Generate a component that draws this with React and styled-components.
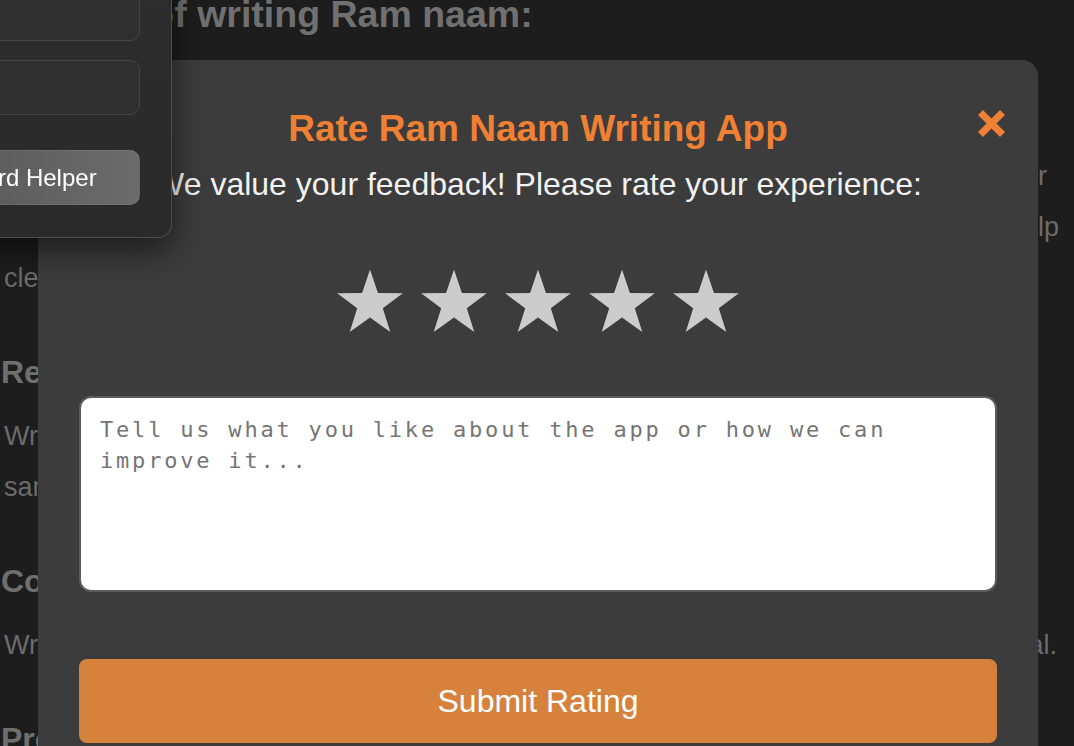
import React from "react";
import styled, { createGlobalStyle } from "styled-components";

const GlobalStyle = createGlobalStyle`
  html, body {
    margin: 0;
    padding: 0;
    background: #1d1d1d;
    overflow: hidden;
  }
  body {
    font-family: "Liberation Sans", Arial, sans-serif;
  }
`;

const Page = styled.div`
  position: relative;
  width: 1074px;
  height: 746px;
  overflow: hidden;
  background: #1d1d1d;
`;

// the article behind the dialog
const Article = styled.main`
  padding: 0 0 0 2px;
  color: #6b6b6b;
`;

const PageTitle = styled.h2`
  margin: -8px 0 0 -9px;
  font-size: 37.5px;
  line-height: 44px;
  font-weight: 700;
  color: #707070;
  white-space: nowrap;
`;

const Section = styled.h3`
  margin: 48px 0 19px -1px;
  font-size: 32px;
  line-height: 40px;
  font-weight: 700;
  color: #6f6f6f;
  white-space: nowrap;
`;

const Para = styled.p`
  margin: ${(p) => (p.$first ? "115px" : "0")} 0 0 2px;
  font-size: 27px;
  line-height: 51px;
`;

const Line = styled.span`
  display: block;
  width: ${(p) => p.$w || 1040}px;
  text-align: left;
  text-align-last: ${(p) => (p.$full ? "justify" : "left")};
`;

// dropdown menu sticking in from the top-left
const Menu = styled.div`
  position: fixed;
  left: -114px;
  top: -47px;
  width: 286px;
  box-sizing: border-box;
  padding: 32px 31px 32px 32px;
  display: flex;
  flex-direction: column;
  gap: 19px;
  background: linear-gradient(180deg, #2d2d2d, #2a2a2a);
  border: 1px solid rgba(255, 255, 255, 0.16);
  border-radius: 14px;
  box-shadow: 0 12px 32px rgba(0, 0, 0, 0.55);
  z-index: 20;
`;

const MenuInput = styled.div`
  height: 55px;
  box-sizing: border-box;
  border: 1px solid #454545;
  border-radius: 10px;
  background: #2f2f2f;
`;

const MenuButton = styled.button`
  margin-top: 16px;
  height: 55px;
  border: 1px solid rgba(255, 255, 255, 0.08);
  border-radius: 10px;
  background: linear-gradient(90deg, #565656, #6b6b6b);
  color: #fff;
  font-family: "Liberation Sans", Arial, sans-serif;
  font-size: 24px;
  white-space: nowrap;
  text-align: center;
  padding: 0;
`;

const Overlay = styled.div`
  position: fixed;
  inset: 0;
  display: flex;
  align-items: flex-start;
  padding: 60px 0 0 38px;
  z-index: 10;
`;

const Modal = styled.div`
  position: relative;
  width: 1000px;
  box-sizing: border-box;
  padding: 47px 41px 40px;
  display: flex;
  flex-direction: column;
  background: #3c3c3c;
  border-radius: 16px;
`;

const Close = styled.button`
  position: absolute;
  top: 50px;
  right: 33px;
  width: 27px;
  height: 27px;
  padding: 0;
  border: none;
  background: none;
  display: flex;
`;

const Title = styled.h2`
  margin: 0;
  text-align: center;
  font-size: 37px;
  line-height: 44px;
  font-weight: 700;
  color: #f08034;
`;

const Subtitle = styled.p`
  margin: 14px 0 0;
  text-align: center;
  font-size: 32px;
  line-height: 38px;
  color: #f2f2f2;
  white-space: nowrap;
`;

const Stars = styled.div`
  margin-top: 66px;
  display: flex;
  justify-content: center;
  gap: 14px;
`;

const Feedback = styled.textarea`
  margin-top: 57px;
  width: 100%;
  height: 196px;
  box-sizing: border-box;
  padding: 16px 19px;
  border: 2px solid #5c5c5c;
  border-radius: 12px;
  background: #fff;
  resize: none;
  font-family: "DejaVu Sans Mono", monospace;
  font-size: 22px;
  line-height: 31px;
  letter-spacing: 2.8px;
  color: #222;
  outline: none;

  &::placeholder {
    color: #757575;
  }
`;

const Submit = styled.button`
  margin-top: 67px;
  width: 100%;
  height: 84px;
  border: none;
  border-radius: 8px;
  background: #d6823c;
  color: #fff;
  font-family: "Liberation Sans", Arial, sans-serif;
  font-size: 32px;
  padding: 0;
`;

const starPoints = (() => {
  const cx = 35;
  const cy = 35;
  const R = 34.5;
  const r = R * 0.39;
  const pts = [];
  for (let i = 0; i < 10; i++) {
    const rad = i % 2 === 0 ? R : r;
    const a = (Math.PI / 5) * i - Math.PI / 2;
    pts.push(`${(cx + rad * Math.cos(a)).toFixed(2)},${(cy + rad * Math.sin(a)).toFixed(2)}`);
  }
  return pts.join(" ");
})();

const Star = () => (
  <svg width="70" height="70" viewBox="0 0 70 70">
    <polygon points={starPoints} fill="#cccccc" />
  </svg>
);

const CloseIcon = () => (
  <svg width="27" height="27" viewBox="0 0 27 27">
    <path d="M2.5 2.5 L24.5 24.5 M24.5 2.5 L2.5 24.5" stroke="#f08034" strokeWidth="7" />
  </svg>
);

export default function App() {
  return (
    <Page>
      <GlobalStyle />
      <Article>
        <PageTitle>Benefits of writing Ram naam:</PageTitle>
        <Para $first>
          <Line $w={1043} $full>
            Writing the divine name brings peace, focus and joy to every sincere seeker
          </Line>
          <Line $w={1055} $full>
            and steadies the mind. Each repetition is a small prayer that can truly help
          </Line>
          <Line>clear away worry and restlessness.</Line>
        </Para>
        <Section>Regular Practice</Section>
        <Para>
          <Line>Write Ram naam every day at a fixed time to build a steady habit, in the</Line>
          <Line>same place and with the same pen.</Line>
        </Para>
        <Section>Concentration</Section>
        <Para>
          <Line $w={1053} $full>
            Write slowly and mindfully; let every letter be calm, pure and spiritual.
          </Line>
        </Para>
        <Section>Progress</Section>
      </Article>

      <Overlay>
        <Modal>
          <Close aria-label="Close">
            <CloseIcon />
          </Close>
          <Title>Rate Ram Naam Writing App</Title>
          <Subtitle>We value your feedback! Please rate your experience:</Subtitle>
          <Stars>
            {[1, 2, 3, 4, 5].map((n) => (
              <Star key={n} />
            ))}
          </Stars>
          <Feedback placeholder="Tell us what you like about the app or how we can improve it..." />
          <Submit>Submit Rating</Submit>
        </Modal>
      </Overlay>

      <Menu>
        <MenuInput />
        <MenuInput />
        <MenuButton>Word Helper</MenuButton>
      </Menu>
    </Page>
  );
}
